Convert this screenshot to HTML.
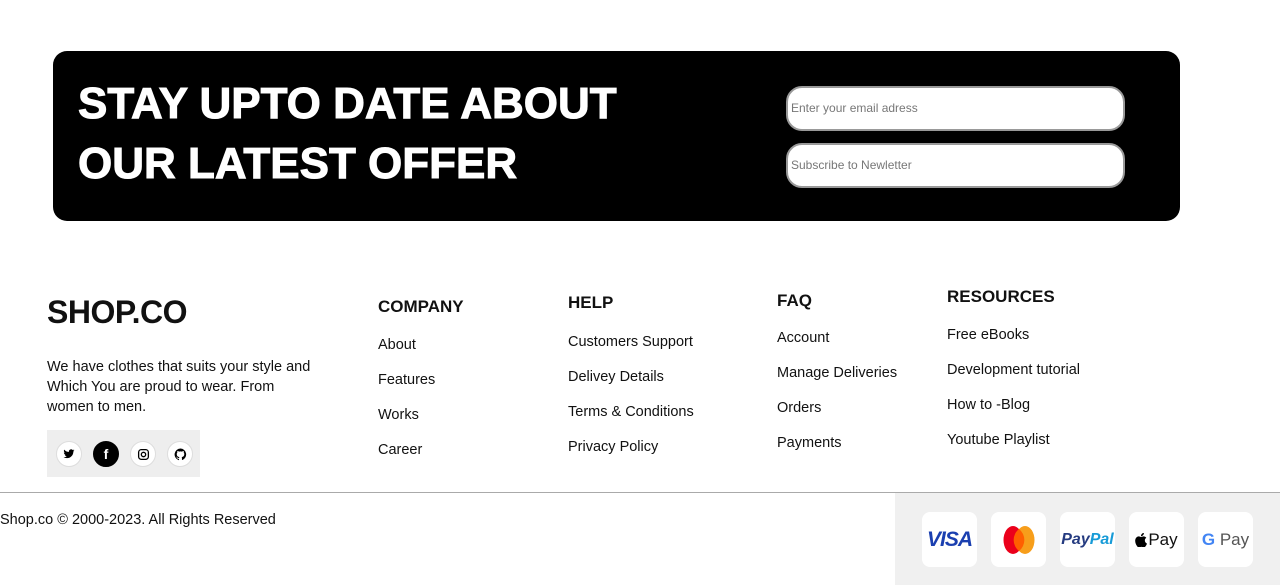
<!DOCTYPE html>
<html><head><meta charset="utf-8"><style>
*{margin:0;padding:0;box-sizing:border-box}
body{width:1280px;height:585px;background:#fff;font-family:"Liberation Sans",sans-serif;color:#111;position:relative;overflow:hidden}
.abs{position:absolute}
.banner{left:53px;top:51px;width:1127px;height:170px;background:#000;border-radius:14px}
.h{left:78px;color:#fff;font-weight:bold;font-size:44px;letter-spacing:0px;white-space:nowrap;-webkit-text-stroke:1px #fff}
.inp{left:786px;width:339px;height:45px;background:#fff;border-radius:16px;border:2px solid #999;font-size:12px;color:#777;padding:13px 0 0 3px}
.col div{font-size:14.5px;position:absolute;white-space:nowrap}
.hd{font-weight:bold;font-size:17px!important}
.soc{left:47px;top:430px;width:153px;height:47px;background:#eee}
.c{position:absolute;top:11px;width:26px;height:26px;border-radius:50%;background:#fff;border:1px solid #ddd;display:flex;align-items:center;justify-content:center}
.pay{position:absolute;top:512px;width:55px;height:55px;background:#fff;border-radius:8px;display:flex;align-items:center;justify-content:center;font-size:18px}
</style></head><body>
<div class="abs banner"></div>
<div class="abs h" style="top:79px">STAY UPTO DATE ABOUT</div>
<div class="abs h" style="top:139px">OUR LATEST OFFER</div>
<div class="abs inp" style="top:86px">Enter your email adress</div>
<div class="abs inp" style="top:143px">Subscribe to Newletter</div>

<div class="abs" style="left:47px;top:294px;font-size:32px;font-weight:bold;letter-spacing:-0.5px">SHOP.CO</div>
<div class="abs" style="left:47px;top:357px;width:272px;font-size:14.5px;line-height:20px">We have clothes that suits your style and Which You are proud to wear. From women to men.</div>
<div class="abs soc">
<div class="c" style="left:9px"><svg width="12" height="12" viewBox="0 0 24 24"><path d="M23 5a9 9 0 0 1-2.6.7A4.5 4.5 0 0 0 22.4 3a9 9 0 0 1-2.9 1.1A4.5 4.5 0 0 0 11.8 8 12.8 12.8 0 0 1 2.5 3.3a4.5 4.5 0 0 0 1.4 6A4.5 4.5 0 0 1 1.8 8.7a4.5 4.5 0 0 0 3.6 4.5 4.5 4.5 0 0 1-2 .1 4.5 4.5 0 0 0 4.2 3.1A9 9 0 0 1 1 18.3 12.8 12.8 0 0 0 7.9 20.3c8.3 0 12.8-6.9 12.8-12.8v-.6A9 9 0 0 0 23 5z"/></svg></div>
<div class="c" style="left:46px;background:#000;border-color:#000;color:#fff;font-weight:bold;font-size:14px">f</div>
<div class="c" style="left:83px"><svg width="13" height="13" viewBox="0 0 24 24" fill="none" stroke="#000" stroke-width="2.4"><rect x="3" y="3" width="18" height="18" rx="5"/><circle cx="12" cy="12" r="4"/></svg></div>
<div class="c" style="left:120px"><svg width="13" height="13" viewBox="0 0 24 24"><path d="M12 1a11 11 0 0 0-3.5 21.4c.6.1.8-.2.8-.5v-2c-3 .7-3.700-1.400-3.700-1.400-.5-1.300-1.200-1.600-1.200-1.600-1-.7.1-.7.1-.7 1.100.1 1.700 1.100 1.700 1.100 1 1.700 2.600 1.200 3.200.9.1-.7.4-1.200.7-1.500-2.400-.3-5-1.200-5-5.400 0-1.200.4-2.200 1.100-2.900-.1-.3-.5-1.400.1-2.900 0 0 .9-.3 3 1.100a10 10 0 0 1 5.500 0c2.100-1.400 3-1.100 3-1.100.6 1.500.2 2.600.1 2.900.7.8 1.100 1.700 1.100 2.900 0 4.200-2.600 5.100-5 5.400.4.3.7 1 .7 2v3c0 .3.2.6.8.5A11 11 0 0 0 12 1z"/></svg></div>
</div>

<div class="col">
<div class="hd" style="left:378px;top:297px">COMPANY</div>
<div style="left:378px;top:337px">About</div>
<div style="left:378px;top:372px">Features</div>
<div style="left:378px;top:407px">Works</div>
<div style="left:378px;top:442px">Career</div>
<div class="hd" style="left:568px;top:293px">HELP</div>
<div style="left:568px;top:334px">Customers Support</div>
<div style="left:568px;top:369px">Delivey Details</div>
<div style="left:568px;top:404px">Terms &amp; Conditions</div>
<div style="left:568px;top:439px">Privacy Policy</div>
<div class="hd" style="left:777px;top:291px">FAQ</div>
<div style="left:777px;top:330px">Account</div>
<div style="left:777px;top:365px">Manage Deliveries</div>
<div style="left:777px;top:400px">Orders</div>
<div style="left:777px;top:435px">Payments</div>
<div class="hd" style="left:947px;top:287px">RESOURCES</div>
<div style="left:947px;top:327px">Free eBooks</div>
<div style="left:947px;top:362px">Development tutorial</div>
<div style="left:947px;top:397px">How to -Blog</div>
<div style="left:947px;top:432px">Youtube Playlist</div>
</div>

<div class="abs" style="left:0;top:492px;width:1280px;height:1px;background:#aaa"></div>
<div class="abs" style="left:0;top:512px;font-size:14.5px">Shop.co © 2000-2023. All Rights Reserved</div>
<div class="abs" style="left:895px;top:493px;width:385px;height:92px;background:#f0f0f0"></div>
<div class="pay" style="left:922px;color:#1a3fb0;font-weight:bold;font-style:italic;font-size:21px;letter-spacing:-1px">VISA</div>
<div class="pay" style="left:991px"><svg width="32" height="30"><ellipse cx="10" cy="15" rx="9.5" ry="14" fill="#eb001b"/><ellipse cx="22" cy="15" rx="9.5" ry="14" fill="#f79e1b"/><path d="M16 4a14 14 0 0 1 0 22a14 14 0 0 1 0-22z" fill="#ff5f00"/></svg></div>
<div class="pay" style="left:1060px;color:#253b80;font-weight:bold;font-style:italic;font-size:16px">Pay<span style="color:#179bd7">Pal</span></div>
<div class="pay" style="left:1129px;font-size:17px"><svg width="12" height="14" viewBox="0 0 17 20" style="margin-right:1px"><path d="M14 10.6c0-2.500 2-3.700 2.100-3.800-1.200-1.700-3-1.900-3.600-2-1.500-.2-3 .9-3.800.9-.8 0-2-.9-3.300-.9C3.700 4.900 2 5.900 1.100 7.500c-1.900 3.200-.5 8 1.300 10.600.9 1.300 1.900 2.700 3.300 2.600 1.300-.1 1.800-.8 3.400-.8s2 .8 3.400.8c1.400 0 2.300-1.300 3.100-2.600 1-1.500 1.400-2.900 1.400-3-.1 0-2.900-1.100-3-4.500zM11.500 3c.7-.9 1.200-2 1.100-3.200-1 0-2.300.7-3 1.600-.7.800-1.200 2-1.100 3.100 1.100.1 2.300-.6 3-1.500z"/></svg>Pay</div>
<div class="pay" style="left:1198px;font-size:17px;color:#555"><b style="color:#4285f4">G</b>&nbsp;Pay</div>
</body></html>
